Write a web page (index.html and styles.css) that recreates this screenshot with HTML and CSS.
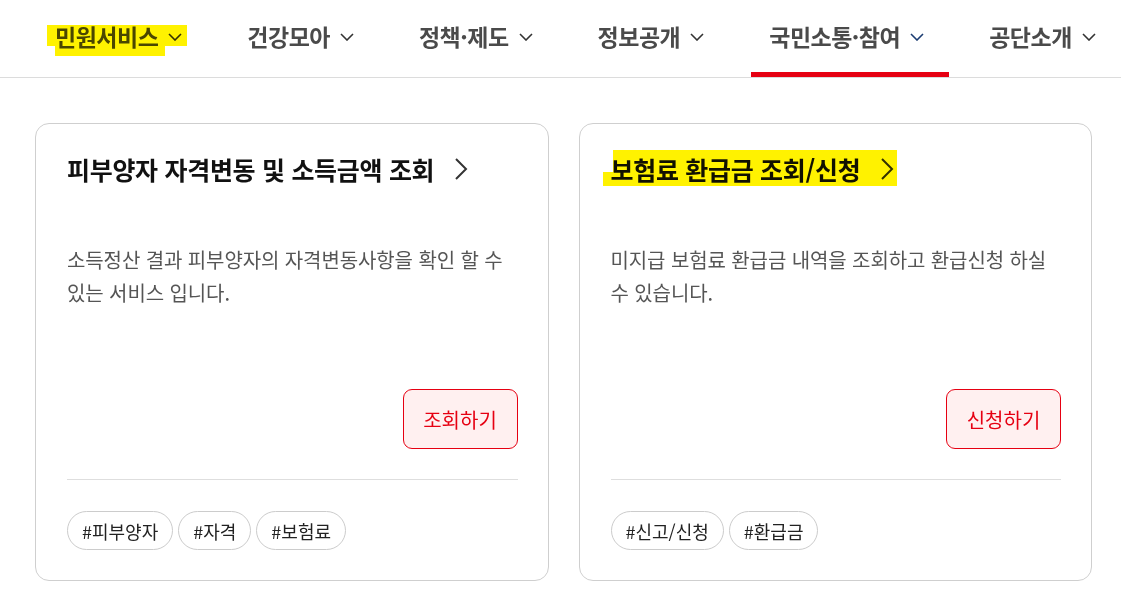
FILE: index.html
```html
<!DOCTYPE html>
<html lang="ko">
<head>
<meta charset="utf-8">
<title>국민건강보험</title>
<link rel="stylesheet" href="styles.css">
</head>
<body>
<header class="gnb">
  <ul class="gnb-list">
    <li class="gnb-item"><span class="gnb-text">민원서비스</span><svg class="chev" viewBox="0 0 14 8"><path d="M1 1l6 6 6-6"/></svg></li>
    <li class="gnb-item"><span class="gnb-text">건강모아</span><svg class="chev" viewBox="0 0 14 8"><path d="M1 1l6 6 6-6"/></svg></li>
    <li class="gnb-item"><span class="gnb-text">정책·제도</span><svg class="chev" viewBox="0 0 14 8"><path d="M1 1l6 6 6-6"/></svg></li>
    <li class="gnb-item"><span class="gnb-text">정보공개</span><svg class="chev" viewBox="0 0 14 8"><path d="M1 1l6 6 6-6"/></svg></li>
    <li class="gnb-item is-active"><span class="gnb-text">국민소통·참여</span><svg class="chev" viewBox="0 0 14 8"><path d="M1 1l6 6 6-6"/></svg></li>
    <li class="gnb-item"><span class="gnb-text">공단소개</span><svg class="chev" viewBox="0 0 14 8"><path d="M1 1l6 6 6-6"/></svg></li>
  </ul>
</header>

<main class="cards">
  <section class="card">
    <h2 class="card-title">피부양자 자격변동 및 소득금액 조회<svg class="arrow" viewBox="0 0 14 24"><path d="M2 2l10 10-10 10"/></svg></h2>
    <p class="card-desc">소득정산 결과 피부양자의 자격변동사항을 확인 할 수 있는 서비스 입니다.</p>
    <div class="card-action"><a class="btn">조회하기</a></div>
    <ul class="tags">
      <li class="tag">#피부양자</li>
      <li class="tag">#자격</li>
      <li class="tag">#보험료</li>
    </ul>
  </section>
  <section class="card">
    <h2 class="card-title">보험료 환급금 조회/신청<svg class="arrow" viewBox="0 0 14 24"><path d="M2 2l10 10-10 10"/></svg></h2>
    <p class="card-desc">미지급 보험료 환급금 내역을 조회하고 환급신청 하실 수 있습니다.</p>
    <div class="card-action"><a class="btn">신청하기</a></div>
    <ul class="tags">
      <li class="tag">#신고/신청</li>
      <li class="tag">#환급금</li>
    </ul>
  </section>
</main>

<div class="hl hl-a"></div>
<div class="hl hl-b"></div>
<div class="hl hl-c"></div>
<div class="hl hl-d"></div>
</body>
</html>
```

FILE: styles.css
```css
* { box-sizing: border-box; }
html, body { margin: 0; padding: 0; background: #fff; }
body {
  font-family: "Noto Sans CJK KR", "Noto Sans", sans-serif;
  color: #222;
  position: relative;
  width: 1121px;
  height: 591px;
  overflow: hidden;
}
ul { list-style: none; margin: 0; padding: 0; }

.gnb {
  height: 78px;
  border-bottom: 1px solid #dcdcdc;
}
.gnb-list {
  display: flex;
  height: 77px;
  padding-left: 36px;
  gap: 21px;
}
.gnb-item {
  position: relative;
  display: flex;
  align-items: center;
  height: 77px;
  padding: 0 25px 5px 19px;
  font-size: 23px;
  font-weight: 700;
  color: #4a4a4a;
  letter-spacing: -0.5px;
}
.gnb-item .chev {
  width: 14px;
  height: 8px;
  margin-left: 10px;
  margin-top: 2px;
  fill: none;
  stroke: #333;
  stroke-width: 1.6;
}
.gnb-item.is-active .chev { stroke: #1c3d72; }
.gnb-item.is-active::after {
  content: "";
  position: absolute;
  left: 1px;
  right: 0;
  bottom: 0;
  height: 5px;
  background: #e60012;
}

.cards {
  display: flex;
  gap: 30px;
  padding: 45px 29px 0 35px;
}
.card {
  flex: 1;
  height: 458px;
  border: 1px solid #cfcfcf;
  border-radius: 14px;
  padding: 23px 30px 30px 31px;
  display: flex;
  flex-direction: column;
}
.card-title {
  margin: 0;
  display: flex;
  align-items: center;
  font-size: 25px;
  font-weight: 700;
  color: #111;
  line-height: 44px;
  letter-spacing: -0.3px;
}
.card-title .arrow {
  width: 14px;
  height: 24px;
  margin-left: 20px;
  fill: none;
  stroke: #333;
  stroke-width: 2;
}
.card-desc {
  margin: 52px 0 0;
  font-size: 20px;
  line-height: 33px;
  color: #555;
  letter-spacing: -0.1px;
}
.card-action {
  margin-top: auto;
  display: flex;
  justify-content: flex-end;
  padding-bottom: 30px;
  border-bottom: 1px solid #dedede;
}
.btn {
  display: flex;
  align-items: center;
  justify-content: center;
  width: 115px;
  height: 60px;
  border: 1px solid #e60012;
  border-radius: 9px;
  background: #fff0f0;
  color: #e60012;
  font-size: 20px;
}
.tags {
  display: flex;
  gap: 5px;
  margin-top: 31px;
}
.tag {
  height: 39px;
  padding: 0 14px;
  border: 1px solid #cccccc;
  border-radius: 20px;
  display: flex;
  align-items: center;
  font-size: 18px;
  color: #222;
}

.hl {
  position: absolute;
  background: #fff200;
  mix-blend-mode: multiply;
  pointer-events: none;
}
.hl-a { left: 47px; top: 25px; width: 140px; height: 21px; }
.hl-b { left: 55px; top: 46px; width: 110px; height: 10px; }
.hl-c { left: 613px; top: 150px; width: 284px; height: 36px; }
.hl-d { left: 603px; top: 172px; width: 10px; height: 14px; }
```
